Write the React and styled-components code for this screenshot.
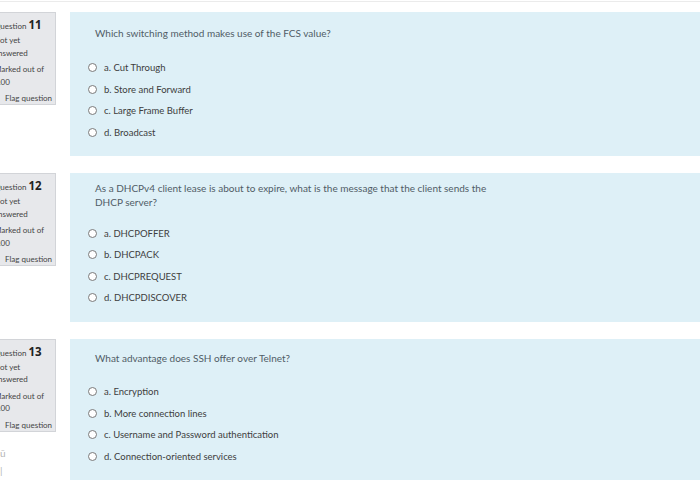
import React from 'react'
import styled, { createGlobalStyle } from "styled-components"

const GlobalStyle = createGlobalStyle`
  body {
    margin: 0;
    background: #fff;
    font-family: "Lato", "Open Sans", sans-serif;
  }
`

const questions = [
  {
    no: 11,
    top: 14,
    gap: 17,
    text: ["Which switching method makes use of the FCS value?"],
    options: ["a. Cut Through", "b. Store and Forward", "c. Large Frame Buffer", "d. Broadcast"],
  },
  {
    no: 12,
    top: 8,
    gap: 13,
    text: ["As a DHCPv4 client lease is about to expire, what is the message that the client sends the", "DHCP server?"],
    options: ["a. DHCPOFFER", "b. DHCPACK", "c. DHCPREQUEST", "d. DHCPDISCOVER"],
  },
  {
    no: 13,
    top: 12,
    gap: 16,
    text: ["What advantage does SSH offer over Telnet?"],
    options: ["a. Encryption", "b. More connection lines", "c. Username and Password authentication", "d. Connection-oriented services"],
  },
]

function Question({ q }) {
  return (
    <Row>
      <InfoCol>
        <Info>
          <InfoInner>
            <QNo>Question <b>{q.no}</b></QNo>
            <InfoLine>Not yet<br />answered</InfoLine>
            <InfoLine>Marked out of<br />1.00</InfoLine>
            <Flag>Flag question</Flag>
          </InfoInner>
        </Info>
      </InfoCol>
      <Content top={q.top}>
        <QText gap={q.gap}>
          {q.text.map((t, i) => <div key={i}>{t}</div>)}
        </QText>
        <Options>
          {q.options.map(o => (
            <Option key={o}>
              <Radio />
              <span>{o}</span>
            </Option>
          ))}
        </Options>
      </Content>
    </Row>
  )
}

export default function App() {
  return (
    <>
      <GlobalStyle />
      <Page>
        {questions.map(q => <Question key={q.no} q={q} />)}
        <Leftover>
          <span>ū</span>
          <span>|</span>
        </Leftover>
      </Page>
    </>
  )
}

const Page = styled.div`
  width: 700px;
  height: 489px;
  overflow: hidden;
  border-top: 1px solid #fff;
  box-sizing: border-box;
  position: relative;

  &::before {
    content: "";
    display: block;
    height: 1px;
    margin-bottom: 10px;
    background: #ebebeb;
  }
`

const Row = styled.div`
  display: flex;
  gap: 14px;
  margin-bottom: 17px;
`

const InfoCol = styled.div`
  width: 56px;
  flex: none;
`

const Info = styled.div`
  height: 93px;
  background: #e7e8eb;
  border: 1px solid #d2d4d8;
  border-left: none;
  box-sizing: border-box;
  overflow: hidden;
  color: #444;
  font-family: "Lato", sans-serif;
  font-size: 8px;
`

const InfoInner = styled.div`
  margin-left: -6px;
  padding-top: 4px;
  white-space: nowrap;
`

const QNo = styled.div`
  line-height: 16px;
  b {
    font-family: "Open Sans", sans-serif;
    font-size: 11.5px;
    font-weight: 700;
    color: #222;
  }
`

const InfoLine = styled.div`
  line-height: 12.5px;
  margin-bottom: 4px;
`

const Flag = styled.div`
  margin-left: 11px;
  margin-top: 3px;
  line-height: 12px;
`

const Content = styled.div`
  flex: 1;
  background: #def0f7;
  padding: ${p => p.top}px 0 13px 25px;
`

const QText = styled.div`
  color: #505c66;
  font-size: 10px;
  line-height: 14px;
  margin-bottom: ${p => p.gap}px;
`

const Options = styled.div`
  display: flex;
  flex-direction: column;
  margin-left: -7px;
`

const Option = styled.div`
  display: flex;
  align-items: center;
  gap: 7px;
  height: 21.6px;
  color: #3d3d3d;
  font-size: 9.5px;
`

const Radio = styled.span`
  width: 7px;
  height: 7px;
  border: 1px solid #7a7a7a;
  border-radius: 50%;
  background: #fff;
`

const Leftover = styled.div`
  position: absolute;
  left: 0;
  top: 444px;
  display: flex;
  flex-direction: column;
  color: #b5b5b5;
  font-size: 10px;
  line-height: 17px;
`
